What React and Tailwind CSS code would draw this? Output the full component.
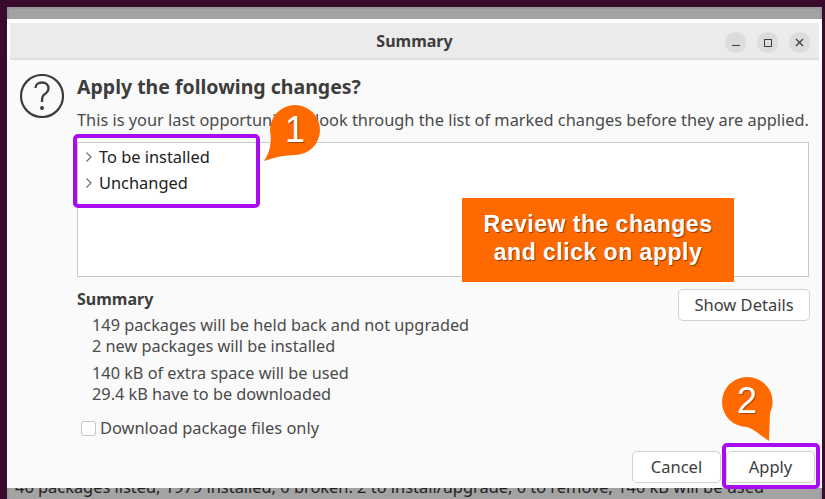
import React from "react";

const ui = { fontFamily: '"Noto Sans", "Open Sans", sans-serif' };

function Chevron() {
  return (
    <svg width="8" height="12" viewBox="0 0 8 12" className="shrink-0">
      <path d="M1.5 1.5 L6 6 L1.5 10.5" fill="none" stroke="#6a6a6a" strokeWidth="1.1" />
    </svg>
  );
}

function Row({ label }) {
  return (
    <div className="flex h-[26px] items-center gap-[6px] pl-[7px] text-[16.4px] text-[#222222]">
      <Chevron />
      <span>{label}</span>
    </div>
  );
}

function WinBtn({ children }) {
  return (
    <div className="flex h-[21px] w-[21px] items-center justify-center rounded-full bg-[#dcdcdc]">
      {children}
    </div>
  );
}

function Button({ className, children }) {
  return (
    <div className={"flex items-center justify-center rounded-[5px] border border-[#d2d2d2] bg-white text-[16.5px] text-[#3d3d3d] " + className}>
      {children}
    </div>
  );
}

function Bubble({ className, path, number, numClass }) {
  return (
    <div className={"absolute " + className}>
      <svg width="70" height="70" viewBox="0 0 70 70" className="absolute left-0 top-0">
        <path d={path} fill="#ff6a00" />
      </svg>
      <span
        className={"absolute text-[36px] leading-none text-white [text-shadow:1px_1px_1px_rgba(90,40,0,0.6)] " + numClass}
        style={{ fontFamily: '"Liberation Sans", sans-serif' }}
      >
        {number}
      </span>
    </div>
  );
}

function Frame({ className }) {
  return <div className={"absolute rounded-[5px] border-[4px] border-[#aa0cf0] " + className} />;
}

export default function App() {
  return (
    <div className="relative h-[499px] w-[825px] overflow-hidden bg-[#380c2a]" style={ui}>
      <div className="ml-[7px] mt-[7px] flex h-[492px] w-[815px] flex-col border-x-2 border-t-2 border-[#999999] bg-[#a3a3a3] pt-[10px]">
        <div className="-mx-[2px] h-[469px] shrink-0 bg-[#fafafa]">
          <div className="flex h-[41px] flex-col bg-white px-[3px] pt-[4px]">
            <div className="relative flex h-[37px] items-center justify-center border-b-2 border-[#dedede] bg-[#ebebeb] pt-[1px]">
              <span className="text-[16px] font-bold text-[#3d3d3d]">Summary</span>
              <div className="absolute right-[9px] top-[9px] flex gap-[11px]">
                <WinBtn>
                  <div className="mt-[6px] h-[1.5px] w-[8px] bg-[#3d3d3d]" />
                </WinBtn>
                <WinBtn>
                  <div className="h-[8px] w-[8px] border border-[#3d3d3d]" />
                </WinBtn>
                <WinBtn>
                  <svg width="9" height="9" viewBox="0 0 9 9">
                    <path d="M1 1 L8 8 M8 1 L1 8" stroke="#3d3d3d" strokeWidth="1.3" />
                  </svg>
                </WinBtn>
              </div>
            </div>
          </div>

          <div className="flex">
            <div className="w-[70px] shrink-0 pl-[13px] pt-[14px]">
              <svg width="44" height="44" viewBox="0 0 44 44">
                <circle cx="22" cy="22" r="21" fill="none" stroke="#3d3d3d" strokeWidth="2.2" />
                <path d="M15.5 14 C15.5 10.5 18.5 8.5 22 8.5 C25.8 8.5 28.5 11 28.5 14.5 C28.5 18.5 25 19.5 23.3 21.5 C22.2 22.8 22 25 22 28" fill="none" stroke="#3d3d3d" strokeWidth="2.3" />
                <circle cx="22" cy="34" r="2" fill="#3d3d3d" />
              </svg>
            </div>
            <div className="w-[733px]">
              <h1 className="mt-[14px] h-[26px] whitespace-nowrap text-[19.5px] font-bold leading-[26px] text-[#3d3d3d]">
                Apply the following changes?
              </h1>
              <p className="mt-[9px] h-[22px] whitespace-nowrap text-[16.35px] leading-[22px] text-[#4a4a4a]">
                This is your last opportunity to look through the list of marked changes before they are applied.
              </p>
              <div className="mr-[1px] mt-[11px] h-[135px] border border-[#c8c8c8] bg-white pt-[1px]">
                <Row label="To be installed" />
                <Row label="Unchanged" />
              </div>
              <div className="flex">
                <div className="flex-1">
                  <h2 className="mt-[11px] h-[22px] text-[16px] font-bold leading-[22px] text-[#3d3d3d]">Summary</h2>
                  <div className="ml-[15px] mt-[5px] text-[16.3px] leading-[21px] text-[#4a4a4a]">
                    <p>149 packages will be held back and not upgraded</p>
                    <p>2 new packages will be installed</p>
                    <p className="mt-[6px]">140 kB of extra space will be used</p>
                    <p>29.4 kB have to be downloaded</p>
                  </div>
                </div>
                <Button className="mt-[12px] h-[32px] w-[132px]">Show Details</Button>
              </div>
              <div className="mt-[12px] flex h-[22px] items-center gap-[4px] pl-[4px] text-[16.4px] text-[#4a4a4a]">
                <div className="h-[15px] w-[15px] rounded-[3px] border border-[#c4c4c4] bg-white" />
                <span>Download package files only</span>
              </div>
              <div className="mt-[12px] flex justify-end gap-[5px]">
                <Button className="h-[32px] w-[89px]">Cancel</Button>
                <Button className="-mr-[5px] h-[32px] w-[89px]">Apply</Button>
              </div>
            </div>
          </div>
        </div>
        <div className="h-[11px] overflow-hidden pl-[6px]">
          <p className="-mt-[12px] whitespace-nowrap text-[16.4px] leading-[22px] text-[#222222]">
            46 packages listed, 1979 installed, 0 broken. 2 to install/upgrade, 0 to remove; 140 kB will be used
          </p>
        </div>
      </div>

      <Frame className="left-[73px] top-[134px] h-[74px] w-[187px]" />
      <Frame className="left-[722px] top-[443px] h-[46px] w-[98px]" />

      <Bubble
        className="left-[255px] top-[100px] h-[70px] w-[70px]"
        path="M40 5 A25 25 0 0 1 40 55 C30 55 20 57 9 61 C15 52 17 42 15 30 A25 25 0 0 1 40 5 Z"
        number="1"
        numClass="left-[30px] top-[12px]"
      />
      <Bubble
        className="left-[712px] top-[372px] h-[70px] w-[70px]"
        path="M35 5 A25 25 0 0 1 58 41 L57 69 C50 65 44 58 35 55 A25 25 0 0 1 35 5 Z"
        number="2"
        numClass="left-[25px] top-[11px]"
      />

      <div
        className="absolute left-[462px] top-[198px] flex h-[84px] w-[272px] flex-col items-center justify-center bg-[#ff6a00] pb-[4px] text-center text-[23px] font-bold leading-[28px] tracking-[0.5px] text-white [text-shadow:1px_1px_1px_rgba(80,40,0,0.7)]"
        style={{ fontFamily: '"Liberation Sans", sans-serif' }}
      >
        <span>Review the changes</span>
        <span>and click on apply</span>
      </div>
    </div>
  );
}
